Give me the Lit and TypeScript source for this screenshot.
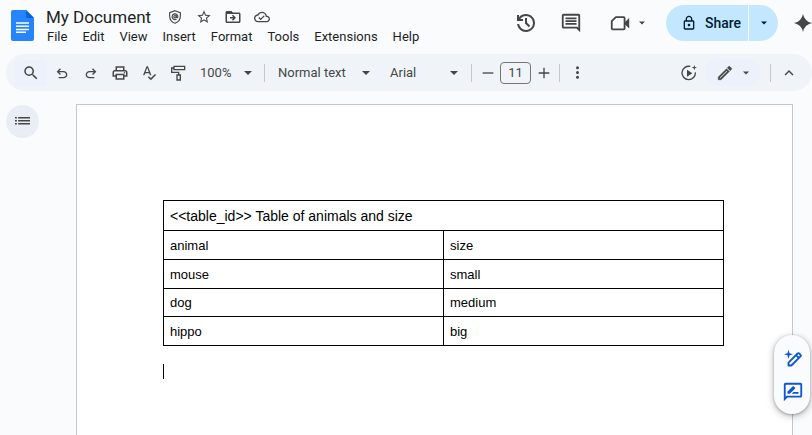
import { LitElement, html, css, svg } from "lit";
import { customElement, property } from "lit/decorators.js";

const sheet = {
  history: svg`<path d="M12 21q-3.45 0-6.01-2.29T3.05 13H5.1q.35 2.6 2.31 4.3T12 19q2.93 0 4.96-2.04T19 12q0-2.93-2.04-4.96T12 5q-1.73 0-3.23.8T6.25 8H9v2H3V4h2v2.35q1.28-1.6 3.11-2.48T12 3q1.88 0 3.51.71t2.85 1.93 1.93 2.85T21 12t-.71 3.51-1.93 2.85-2.85 1.93T12 21Zm2.8-4.8L11 12.4V7h2v4.6l3.2 3.2Z"/>`,
  comment: svg`<path d="M22 4c0-1.1-.9-2-2-2H4c-1.1 0-2 .9-2 2v12c0 1.1.9 2 2 2h14l4 4zm-2 0v13.17L18.83 16H4V4zM6 12h12v2H6zm0-3h12v2H6zm0-3h12v2H6z"/>`,
  camera: svg`<path fill="none" stroke="currentColor" stroke-width="2" stroke-linejoin="round" d="M7.500 5.500H16a1 1 0 0 1 1 1V18a1 1 0 0 1-1 1H4a1 1 0 0 1-1-1V10Z"/><path d="M17 11.500 22 6.500V18L17 13Z"/>`,
  lock: svg`<path d="M18 8h-1V6c0-2.760-2.240-5-5-5S7 3.240 7 6v2H6c-1.100 0-2 .9-2 2v10c0 1.100.9 2 2 2h12c1.100 0 2-.9 2-2V10c0-1.100-.9-2-2-2zM9 6c0-1.660 1.340-3 3-3s3 1.340 3 3v2H9V6zm9 14H6V10h12v10zm-6-3c1.100 0 2-.9 2-2s-.9-2-2-2-2 .9-2 2 .9 2 2 2z"/>`,
  spark: svg`<path d="M12 0Q14 10 24 12 14 14 12 24 10 14 0 12 10 10 12 0Z"/>`,
  shield: svg`<g fill="none" stroke="currentColor" stroke-width="1.700"><path d="M12 2.500 20 5.500V11c0 5-3.200 8.800-8 10.500C7.200 19.800 4 16 4 11V5.500Z"/><circle cx="12" cy="11.500" r="1.800"/><path d="M13.800 9.500v2.500c0 1.700 2.500 1.500 2.500-.5a4.300 4.300 0 1 0-2 3.700"/></g>`,
  star: svg`<path d="M22 9.240l-7.190-.62L12 2 9.190 8.630 2 9.240l5.460 4.730L5.820 21 12 17.270 18.180 21l-1.630-7.030L22 9.240zM12 15.400l-3.760 2.270 1-4.280-3.320-2.880 4.380-.38L12 6.100l1.710 4.040 4.380.38-3.320 2.880 1 4.280L12 15.400z"/>`,
  folder: svg`<path d="M20 6h-8l-2-2H4c-1.100 0-2 .9-2 2v12c0 1.100.9 2 2 2h16c1.100 0 2-.9 2-2V8c0-1.100-.9-2-2-2zm0 12H4V8h16v10zm-8-1 4-4-4-4-1.400 1.400L12.200 12H8v2h4.200l-1.600 1.600z"/>`,
  cloud: svg`<path d="M19.350 10.040C18.670 6.590 15.640 4 12 4 9.110 4 6.600 5.640 5.350 8.040 2.340 8.360 0 10.910 0 14c0 3.310 2.690 6 6 6h13c2.760 0 5-2.240 5-5 0-2.640-2.050-4.780-4.650-4.960zM19 18H6c-2.210 0-4-1.790-4-4 0-2.050 1.530-3.760 3.560-3.970l1.070-.11.5-.95C8.080 7.140 9.940 6 12 6c2.620 0 4.880 1.860 5.390 4.430l.3 1.500 1.530.11c1.560.1 2.780 1.410 2.780 2.960 0 1.650-1.350 3-3 3zm-9-3.820l-2.090-2.090L6.500 13.500 10 17l6.010-6.010-1.410-1.410z"/>`,
  search: svg`<path d="M15.500 14h-.79l-.28-.27A6.471 6.471 0 0 0 16 9.500 6.500 6.500 0 1 0 9.500 16c1.610 0 3.090-.59 4.230-1.570l.27.28v.79l5 4.990L20.490 19l-4.990-5zm-6 0C7.010 14 5 11.990 5 9.500S7.010 5 9.500 5 14 7.010 14 9.500 11.990 14 9.500 14z"/>`,
  undo: svg`<path d="M7 20v-2h7.100q1.575 0 2.737-1T18 14.500t-1.163-2.500T14.100 11H7.800l2.600 2.600L9 15 4 10l5-5 1.400 1.400L7.800 9h6.300q2.425 0 4.162 1.575T20 14.500t-1.738 3.925T14.100 20Z"/>`,
  redo: svg`<path d="M17 20v-2H9.900q-1.575 0-2.737-1T6 14.500t1.163-2.500T9.900 11h6.300l-2.600 2.600L15 15l5-5-5-5-1.400 1.400L16.200 9H9.900q-2.425 0-4.162 1.575T4 14.500t1.738 3.925T9.900 20Z"/>`,
  print: svg`<path d="M19 8h-1V3H6v5H5c-1.660 0-3 1.340-3 3v6h4v4h12v-4h4v-6c0-1.660-1.340-3-3-3zM8 5h8v3H8V5zm8 12v2H8v-4h8v2zm2-2v-2H6v2H4v-4c0-.55.45-1 1-1h14c.55 0 1 .45 1 1v4h-2z"/><circle cx="18" cy="11.500" r="1"/>`,
  spell: svg`<path d="M13.400 15.500h2.200L10.400 2H8.300L3 15.500h2.200l1.200-3.300h5.800zM7 10.400 9.300 4l2.300 6.400z"/><path fill="none" stroke="currentColor" stroke-width="2.200" d="M11 17.500l3.800 3.700 7-7"/>`,
  paint: svg`<g fill="none" stroke="currentColor" stroke-width="2"><path d="M6 2h16v5H6zM6 4.500H2.500v6.500H13V15"/><path d="M10.500 15h5v7.500h-5z"/></g>`,
  minus: svg`<path d="M4 11h16v2H4z"/>`,
  plus: svg`<path d="M4 11h7V4h2v7h7v2h-7v7h-2v-7H4z"/>`,
  dots: svg`<circle cx="12" cy="4.500" r="2.400"/><circle cx="12" cy="12" r="2.400"/><circle cx="12" cy="19.500" r="2.400"/>`,
  play: svg`<path fill="none" stroke="currentColor" stroke-width="2" d="M14 2.200A10 10 0 1 0 21.500 11"/><path d="M9 7v10.500l8-5.200zM20 0l1 3 3 1-3 1-1 3-1-3-3-1 3-1z"/>`,
  pencil: svg`<path stroke="currentColor" stroke-width=".6" d="M14.060 9.020l.92.92L5.920 19H5v-.92l9.060-9.060M17.660 3c-.25 0-.51.1-.7.29l-1.830 1.830 3.750 3.750 1.830-1.830c.39-.39.39-1.020 0-1.410l-2.340-2.340c-.2-.2-.45-.29-.71-.29zm-3.600 3.190L3 17.250V21h3.750L17.810 9.940l-3.750-3.750z"/>`,
  chevron: svg`<path d="M12 8l-6 6 1.400 1.400 4.600-4.600 4.600 4.600L18 14z"/>`,
  caret: svg`<path d="M0 6h24L12 18z"/>`,
  list: svg`<path d="M0 4.800h3v2.400H0zM0 9.600h3V12H0zM0 14.400h3v2.400H0zM5 4.800h19v2.400H5zM5 9.600h19V12H5zM5 14.400h19v2.400H5z"/>`,
  magic: svg`<path d="M6 1 7.400 5.600 12 7 7.400 8.400 6 13 4.600 8.400 0 7 4.600 5.600Z"/><path fill="none" stroke="currentColor" stroke-width="2.400" stroke-linejoin="round" d="M6 18.200 18.200 6a1.500 1.500 0 0 1 2.100 0l1.700 1.700a1.500 1.500 0 0 1 0 2.100L9.800 22H6zM16 8.200l3.800 3.800"/>`,
  suggest: svg`<path d="M20 2H4c-1.100 0-2 .9-2 2v18l4-4h14c1.100 0 2-.9 2-2V4c0-1.100-.9-2-2-2zm0 14H5.170L4 17.170V4h16v12zm-9.500-2H18v-2h-5.500zm3.860-5.870c.2-.2.2-.51 0-.71l-1.770-1.770c-.2-.2-.51-.2-.71 0L6 11.530V14h2.470z"/>`,
};

type IconName = keyof typeof sheet;

@customElement("doc-icon")
export class DocIcon extends LitElement {
  @property() name: IconName = "caret";

  static styles = css`
    :host { display: inline-flex; flex: none; width: 16px; height: 16px; }
    svg { width: 100%; height: 100%; fill: currentColor; display: block; }
  `;

  render() {
    return html`<svg viewBox="0 0 24 24" aria-hidden="true">${sheet[this.name]}</svg>`;
  }
}

const base = css`
  * { box-sizing: border-box; }
  button, input, select {
    margin: 0; padding: 0; border: 0; background: none; color: inherit; font: inherit; outline: none;
  }
  button { display: inline-flex; align-items: center; justify-content: center; flex: none; cursor: pointer; }
  .s6 { width: 6px; height: 6px; }
  .s8 { width: 8px; height: 8px; }
  .s15 { width: 15px; height: 15px; }
  .s18 { width: 18px; height: 18px; }
  .s22 { width: 22px; height: 22px; }
  .s24 { width: 24px; height: 24px; }
`;

@customElement("doc-header")
export class DocHeader extends LitElement {
  static styles = [base, css`
    :host { display: flex; align-items: flex-start; padding: 5px 0 10px 11px; color: #444746; }
    .logo { width: 23px; height: 31px; margin-top: 5px; flex: none; }
    .name { margin-left: 12px; flex: 1; min-width: 0; }
    .row { display: flex; align-items: center; height: 23px; }
    .title { width: 114px; height: 23px; color: #1f1f1f; font-size: 17px; }
    .row button { width: 29px; height: 23px; }
    .menu { display: flex; gap: 15px; padding-left: 1px; color: #1f1f1f; }
    .menu button { height: 16px; font-size: 13px; }
    .actions { display: flex; align-items: center; height: 36px; flex: none; }
    .actions > button { width: 30px; height: 36px; margin-right: 15px; }
    .actions > .meet { width: 38px; gap: 8px; margin: 0 20px 0 7px; }
    .share { display: flex; gap: 1px; height: 36px; border-radius: 18px; overflow: hidden; color: #001d35; font-size: 14px; font-weight: 500; }
    .share button { background: #c2e7ff; height: 36px; }
    .main { width: 82px; gap: 8px; padding-left: 8px; }
    .more { width: 29px; }
    .actions > .spark { width: 18px; margin: 0 0 0 16px; }
  `];

  render() {
    return html`
      <svg class="logo" viewBox="0 0 23 31" aria-hidden="true">
        <path fill="#2684fc" d="M2 0H15L23 8V29a2 2 0 0 1-2 2H2a2 2 0 0 1-2-2V2A2 2 0 0 1 2 0Z" />
        <path fill="#0066da" d="M15 0 23 8H17a2 2 0 0 1-2-2Z" />
        <path fill="#fff" d="M5 12.300H18v1.500H5zM5 15.500H18v1.500H5zM5 18.700H18v1.500H5zM5 21.600H15v1.500H5z" />
      </svg>
      <div class="name">
        <div class="row">
          <input class="title" aria-label="Document name" .value=${"My Document"} />
          <button aria-label="Security"><doc-icon name="shield"></doc-icon></button>
          <button aria-label="Star"><doc-icon name="star"></doc-icon></button>
          <button aria-label="Move"><doc-icon class="s18" name="folder"></doc-icon></button>
          <button aria-label="Saved to cloud"><doc-icon name="cloud"></doc-icon></button>
        </div>
        <nav class="menu">
          ${["File", "Edit", "View", "Insert", "Format", "Tools", "Extensions", "Help"].map((m) => html`<button>${m}</button>`)}
        </nav>
      </div>
      <div class="actions">
        <button aria-label="History"><doc-icon class="s24" name="history"></doc-icon></button>
        <button aria-label="Comments"><doc-icon class="s22" name="comment"></doc-icon></button>
        <button class="meet" aria-label="Meet"><doc-icon class="s22" name="camera"></doc-icon><doc-icon class="s6" name="caret"></doc-icon></button>
        <div class="share">
          <button class="main"><doc-icon name="lock"></doc-icon>Share</button>
          <button class="more" aria-label="Share options"><doc-icon class="s6" name="caret"></doc-icon></button>
        </div>
        <button class="spark" aria-label="Assistant"><doc-icon class="s18" name="spark"></doc-icon></button>
      </div>
    `;
  }
}

@customElement("doc-toolbar")
export class DocToolbar extends LitElement {
  static styles = [base, css`
    :host { display: flex; align-items: center; height: 37px; margin-left: 6px; padding: 0 9px 0 8px; border-radius: 19px; background: #f0f4f9; color: #444746; font-size: 13px; }
    button { width: 29px; height: 26px; }
    .find { width: 33px; background: #ecf1fb; border-radius: 4px; }
    .sep { width: 1px; height: 18px; margin: 0 3px; background: #c7c7c7; flex: none; }
    .pick { display: flex; align-items: center; margin: 0 9px 0 8px; flex: none; }
    .pick select { appearance: none; flex: 1; min-width: 0; height: 26px; }
    .zoom { width: 52px; }
    .style { width: 92px; margin: 0 10px; }
    .font { width: 68px; margin: 0 10px; }
    .step { width: 25px; }
    .size { width: 31px; height: 22px; border: 1px solid #747775; border-radius: 4px; text-align: center; flex: none; }
    .space { flex: 1; }
    .mode { width: 56px; height: 27px; gap: 9px; margin: 0 6px 0 2px; padding-right: 2px; border-radius: 14px; background: #ecf1fb; }
  `];

  private tool(name: IconName, label: string, cls = "") {
    return html`<button aria-label=${label}><doc-icon class=${cls} name=${name}></doc-icon></button>`;
  }

  private pick(cls: string, label: string, value: string) {
    return html`<div class="pick ${cls}"><select aria-label=${label}><option>${value}</option></select><doc-icon class="s8" name="caret"></doc-icon></div>`;
  }

  render() {
    return html`
      <button class="find" aria-label="Search"><doc-icon class="s18" name="search"></doc-icon></button>
      ${this.tool("undo", "Undo")} ${this.tool("redo", "Redo")}
      ${this.tool("print", "Print", "s18")} ${this.tool("spell", "Spelling")}
      ${this.tool("paint", "Paint format")}
      ${this.pick("zoom", "Zoom", "100%")}
      <span class="sep"></span>
      ${this.pick("style", "Styles", "Normal text")} ${this.pick("font", "Font", "Arial")}
      <span class="sep"></span>
      <button class="step" aria-label="Decrease font size"><doc-icon name="minus"></doc-icon></button>
      <input class="size" aria-label="Font size" .value=${"11"} />
      <button class="step" aria-label="Increase font size"><doc-icon name="plus"></doc-icon></button>
      <span class="sep"></span>
      ${this.tool("dots", "More", "s15")}
      <span class="space"></span>
      ${this.tool("play", "Preview")}
      <button class="mode" aria-label="Editing mode"><doc-icon class="s18" name="pencil"></doc-icon><doc-icon class="s6" name="caret"></doc-icon></button>
      <span class="sep"></span>
      ${this.tool("chevron", "Hide menus", "s18")}
    `;
  }
}

const rows = [["animal", "size"], ["mouse", "small"], ["dog", "medium"], ["hippo", "big"]];

@customElement("app-root")
export class AppRoot extends LitElement {
  static styles = [base, css`
    :host { position: relative; display: flex; flex-direction: column; min-height: 100vh; overflow: hidden; background: #f9fbfd; font-family: Roboto, sans-serif; }
    .body { display: flex; flex: 1; padding-top: 13px; }
    .side { width: 70px; margin-left: 6px; flex: none; }
    .outline { width: 33px; height: 33px; margin-top: 1px; border-radius: 50%; background: #e9eef6; color: #444746; }
    .page { flex: 1; margin-right: 19px; padding: 95px 68px 0 86px; border: 1px solid #c7c7c7; border-bottom: 0; background: #fff; color: #000; font-family: "Liberation Sans", Arial, sans-serif; }
    table { width: 100%; height: 146px; border-collapse: collapse; table-layout: fixed; font-size: 13px; line-height: 16px; }
    th, td { padding: 0 6px; border: 1px solid #000; text-align: left; font-weight: 400; }
    th { height: 30px; font-size: 14px; }
    td { padding-top: 2px; }
    .cursor { width: 1px; height: 15px; margin-top: 18px; background: #000; }
    .float { position: absolute; right: 2px; bottom: 21px; display: flex; flex-direction: column; width: 36px; padding: 6px 0 5px 1px; border-radius: 18px; background: #f9fbfd; box-shadow: 0 1px 3px rgba(0, 0, 0, 0.3), 0 2px 6px 2px rgba(0, 0, 0, 0.15); color: #0b57d0; }
    .float button { width: 36px; height: 34px; }
  `];

  render() {
    return html`
      <doc-header></doc-header>
      <doc-toolbar></doc-toolbar>
      <main class="body">
        <aside class="side">
          <button class="outline" aria-label="Outline"><doc-icon class="s15" name="list"></doc-icon></button>
        </aside>
        <article class="page">
          <table>
            <thead><tr><th colspan="2">&lt;&lt;table_id&gt;&gt; Table of animals and size</th></tr></thead>
            <tbody>${rows.map((r) => html`<tr>${r.map((c) => html`<td>${c}</td>`)}</tr>`)}</tbody>
          </table>
          <div class="cursor"></div>
        </article>
      </main>
      <div class="float">
        <button aria-label="Help me write"><doc-icon class="s18" name="magic"></doc-icon></button>
        <button aria-label="Suggest edits"><doc-icon class="s22" name="suggest"></doc-icon></button>
      </div>
    `;
  }
}
